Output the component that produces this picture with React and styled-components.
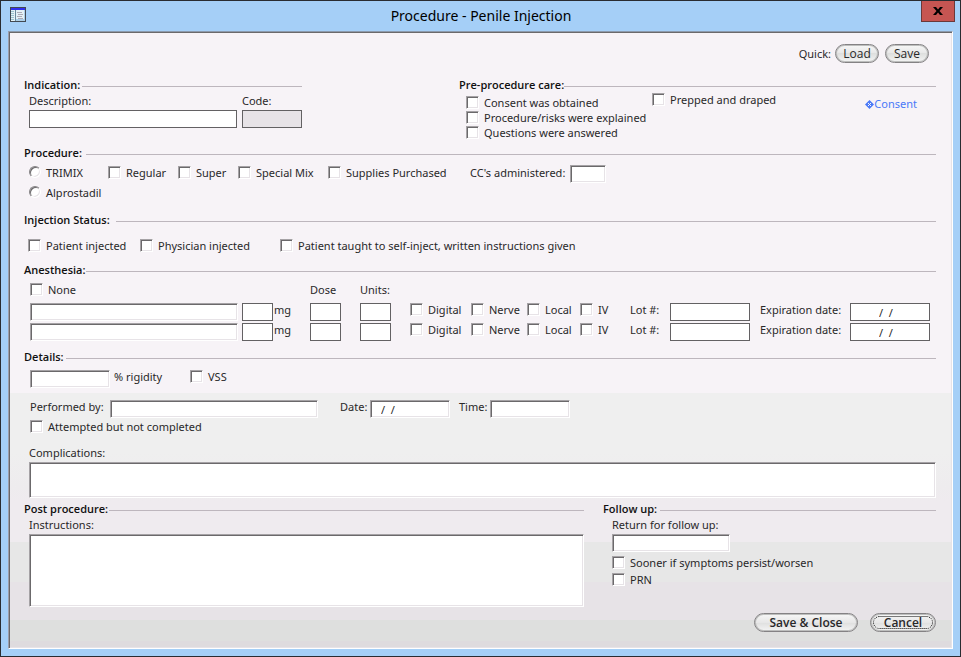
import React from 'react';
import styled, { createGlobalStyle } from 'styled-components';

const ANESTHESIA_TYPES = ['Digital', 'Nerve', 'Local', 'IV'];

const Check = ({ label, type = 'checkbox', name, height }) => (
  <CheckLabel $height={height}>
    {type === 'radio' ? <RadioInput type="radio" name={name} /> : <CheckInput type="checkbox" />}
    <span>{label}</span>
  </CheckLabel>
);

const Heading = ({ children, width }) => (
  <SectionHeading>
    <HeadingText $width={width}>{children}</HeadingText>
    <Rule />
  </SectionHeading>
);

const AnesthesiaRow = ({ index }) => (
  <AnesthesiaGrid>
    <SunkenInput $width={208} aria-label={`Anesthetic ${index}`} />
    <FlatInput $width={31} id={`amount-${index}`} />
    <Label htmlFor={`amount-${index}`}>mg</Label>
    <FlatInput $width={31} aria-label={`Dose ${index}`} />
    <FlatInput $width={31} aria-label={`Units ${index}`} />
    {ANESTHESIA_TYPES.map((type) => (
      <Check key={type} label={type} height={16} />
    ))}
    <Label htmlFor={`lot-${index}`}>Lot #:</Label>
    <FlatInput id={`lot-${index}`} />
    <span />
    <Label htmlFor={`expires-${index}`}>Expiration date:</Label>
    <FlatInput id={`expires-${index}`} defaultValue="/  /" $indent={28} />
  </AnesthesiaGrid>
);

const App = () => {
  return (
    <>
      <GlobalStyle />
      <Window>
        <TitleBar>
          <TitleIcon viewBox="0 0 16 15" shapeRendering="crispEdges" aria-hidden="true">
            <rect width="16" height="15" fill="#424952" />
            <rect x="1" y="1" width="14" height="13" fill="#e4f1f6" />
            <rect x="1" y="1" width="14" height="2" fill="#3130ef" />
            <path d="M1 4h3v1H1zM1 6h3v1H1zM1 8h3v1H1zM1 10h3v1H1zM1 12h3v1H1z" fill="#9cc3ce" />
            <path d="M5 3h1v11H5z" fill="#6b8a9c" />
            <path d="M7 5h5v1H7zM8 7h5v1H8zM7 9h5v1H7zM8 11h5v1H8z" fill="#adaab5" />
            <path d="M14 3h1v11h-1zM6 12h8v2H6z" fill="#adcfe7" />
          </TitleIcon>
          <Title>Procedure - Penile Injection</Title>
          <CloseButton aria-label="Close">
            <svg width="10" height="8" viewBox="0 0 10 8" aria-hidden="true">
              <path d="M0 0h3l2 2.500L7 0h3L6.500 4 10 8H7L5 5.500 3 8H0l3.500-4z" fill="#000" />
            </svg>
          </CloseButton>
        </TitleBar>

        <Panel>
          <QuickBar>
            <Label as="span">Quick:</Label>
            <QuickButtons>
              <PillButton $width={44}>Load</PillButton>
              <PillButton $width={44}>Save</PillButton>
            </QuickButtons>
          </QuickBar>

          <TopColumns>
            <section>
              <Heading width={58}>Indication:</Heading>
              <IndicationFields>
                <Stack>
                  <Label htmlFor="description">Description:</Label>
                  <FlatInput id="description" />
                </Stack>
                <Stack>
                  <Label htmlFor="code">Code:</Label>
                  <FlatInput id="code" readOnly />
                </Stack>
              </IndicationFields>
            </section>
            <section>
              <Heading width={103}>Pre-procedure care:</Heading>
              <CareFields>
                <CareList>
                  <Check label="Consent was obtained" height={15} />
                  <Check label="Procedure/risks were explained" height={15} />
                  <Check label="Questions were answered" height={15} />
                </CareList>
                <Check label="Prepped and draped" height={14} />
                <ConsentLink href="#consent">
                  <svg width="9" height="9" viewBox="0 0 9 9" aria-hidden="true">
                    <path d="M4.500 0L9 4.500 4.500 9 0 4.500z" fill="#4a79f7" />
                    <path d="M3 3l3 3M6 3L3 6" stroke="#f7f3f7" strokeWidth="1" />
                  </svg>
                  Consent
                </ConsentLink>
              </CareFields>
            </section>
          </TopColumns>

          <section>
            <Heading width={62}>Procedure:</Heading>
            <ProcedureGrid>
              <Check type="radio" name="drug" label="TRIMIX" />
              <Check label="Regular" />
              <Check label="Super" />
              <Check label="Special Mix" />
              <Check label="Supplies Purchased" />
              <Label htmlFor="ccs">CC's administered:</Label>
              <SunkenInput id="ccs" />
              <Check type="radio" name="drug" label="Alprostadil" />
            </ProcedureGrid>
          </section>

          <section>
            <Heading width={92}>Injection Status:</Heading>
            <StatusGrid>
              <Check label="Patient injected" />
              <Check label="Physician injected" />
              <Check label="Patient taught to self-inject, written instructions given" />
            </StatusGrid>
          </section>

          <section>
            <Heading width={62}>Anesthesia:</Heading>
            <AnesthesiaHead>
              <Check label="None" />
              <Label as="span">Dose</Label>
              <Label as="span">Units:</Label>
            </AnesthesiaHead>
            <AnesthesiaRow index={1} />
            <AnesthesiaRow index={2} />
          </section>

          <DetailsSection>
            <Heading width={42}>Details:</Heading>
            <DetailsGrid>
              <SunkenInput id="rigidity" />
              <Label htmlFor="rigidity">% rigidity</Label>
              <Check label="VSS" height={16} />
            </DetailsGrid>
          </DetailsSection>

          <section>
            <PerformedGrid>
              <Label htmlFor="performed">Performed by:</Label>
              <SunkenInput id="performed" />
              <span />
              <Label htmlFor="date">Date:</Label>
              <SunkenInput id="date" defaultValue="/  /" $indent={10} />
              <span />
              <Label htmlFor="time">Time:</Label>
              <SunkenInput id="time" />
            </PerformedGrid>
            <Attempted>
              <Check label="Attempted but not completed" height={16} />
            </Attempted>
            <Complications>
              <Label htmlFor="complications">Complications:</Label>
              <TextArea id="complications" $height={36} />
            </Complications>
          </section>

          <BottomColumns>
            <section>
              <Heading width={85}>Post procedure:</Heading>
              <Instructions>
                <Label htmlFor="instructions">Instructions:</Label>
                <TextArea id="instructions" $height={73} />
              </Instructions>
            </section>
            <section>
              <Heading width={57}>Follow up:</Heading>
              <FollowUp>
                <Label htmlFor="return">Return for follow up:</Label>
                <SunkenInput id="return" />
                <FollowChecks>
                  <Check label="Sooner if symptoms persist/worsen" height={17} />
                  <Check label="PRN" height={17} />
                </FollowChecks>
              </FollowUp>
            </section>
          </BottomColumns>

          <Footer>
            <PillButton $width={104} $strong>Save &amp; Close</PillButton>
            <PillButton $width={66} $strong $focused>Cancel</PillButton>
          </Footer>
        </Panel>
      </Window>
    </>
  );
};

const GlobalStyle = createGlobalStyle`
  * { box-sizing: border-box; }

  body {
    margin: 0;
    font-family: 'Noto Sans', 'Open Sans', sans-serif;
    font-size: 11px;
    line-height: 16px;
    color: #292829;
  }

  input, button, textarea { font: inherit; color: inherit; }
`;

const Window = styled.main`
  display: flex;
  flex-direction: column;
  min-width: 960px;
  min-height: 100vh;
  padding: 0 7px 7px;
  border: 1px solid #292c31;
  background: #a5cff7;
`;

const TitleBar = styled.header`
  display: grid;
  grid-template-columns: 31px 1fr 34px;
  align-items: start;
  height: 30px;
  padding-left: 2px;
  margin-right: -2px;
`;

const TitleIcon = styled.svg`
  width: 16px;
  height: 15px;
  margin-top: 6px;
`;

const Title = styled.h1`
  margin: 0;
  font-size: 14px;
  font-weight: 400;
  line-height: 30px;
  text-align: center;
  color: #000;
`;

const CloseButton = styled.button`
  display: flex;
  justify-content: center;
  align-items: center;
  height: 21px;
  padding: 0;
  border: 1px solid #6b3839;
  border-top: 0;
  background: #c65552;
`;

const Panel = styled.div`
  flex: 1;
  padding: 12px 16px 16px 15px;
  border: 1px solid;
  border-color: #8c9aad #fff #fff #9c9eab;
  box-shadow: inset 1px 1px 0 #6b696b, inset -1px -1px 0 #e7e3e7;
  background: linear-gradient(
    #f7f3f7 361px,
    #efefef 361px 420px,
    #eeecee 455px,
    #efebef 470px 510px,
    #e7e7e7 510px 550px,
    #e7e3e7 550px 588px,
    #dedfde 588px 609px,
    #dedbde 609px
  );
`;

const QuickBar = styled.div`
  display: flex;
  justify-content: flex-end;
  align-items: center;
  gap: 4px;
  padding-right: 7px;
  margin-bottom: 14px;
`;

const QuickButtons = styled.div`
  display: flex;
  gap: 6px;
`;

const Label = styled.label`
  white-space: nowrap;
`;

const SectionHeading = styled.div`
  display: flex;
  align-items: center;
  height: 16px;
`;

const HeadingText = styled.h2`
  min-width: ${({ $width }) => $width}px;
  margin: 0;
  font-family: 'Open Sans', sans-serif;
  font-size: 11px;
  font-weight: 600;
  line-height: 16px;
  white-space: nowrap;
  color: #101010;
`;

const Rule = styled.div`
  flex: 1;
  height: 1px;
  margin-top: 3px;
  background: #bdb6bd;
`;

const SunkenInput = styled.input`
  display: block;
  width: ${({ $width }) => ($width ? `${$width}px` : '100%')};
  min-width: 0;
  height: 18px;
  padding: 0 2px 0 ${({ $indent = 2 }) => $indent}px;
  border: 1px solid;
  border-color: #a5a2a5 #fff #fff #a5a2a5;
  border-radius: 0;
  box-shadow: inset 1px 1px 0 #6b696b, inset -1px -1px 0 #e7e3e7;
  background: #fff;
`;

const FlatInput = styled(SunkenInput)`
  border-color: #636163;
  box-shadow: none;

  &:read-only { background: #e7e3e7; }
`;

const TextArea = styled.textarea`
  display: block;
  width: 100%;
  height: ${({ $height }) => $height}px;
  padding: 2px;
  border: 1px solid;
  border-color: #a5a2a5 #fff #fff #a5a2a5;
  box-shadow: inset 1px 1px 0 #6b696b, inset -1px -1px 0 #e7e3e7;
  background: #fff;
  resize: none;
`;

const CheckLabel = styled.label`
  display: flex;
  align-items: center;
  gap: 5px;
  height: ${({ $height = 20 }) => $height}px;
  white-space: nowrap;
`;

const CheckInput = styled.input`
  appearance: none;
  flex: none;
  width: 13px;
  height: 13px;
  margin: 0 0 1px;
  border: 1px solid;
  border-color: #a5a2a5 #fff #fff #a5a2a5;
  box-shadow: inset 1px 1px 0 #6b696b, inset -1px -1px 0 #e7e3e7;
  background: #fff;
`;

const RadioInput = styled(CheckInput)`
  width: 12px;
  height: 12px;
  margin: 0 0 2px 1px;
  border-color: #848284 #fff #fff #848284;
  border-radius: 50%;
`;

const PillButton = styled.button`
  width: ${({ $width }) => $width}px;
  height: 19px;
  padding: 0;
  border: 1px solid #848284;
  border-radius: 10px;
  box-shadow: inset 0 0 0 1px #bdbebd;
  background: linear-gradient(#f7f7f7, #e7e7e7 50%, #dedfde 50%, #f4f4f4);
  font-family: 'Open Sans', sans-serif;
  font-size: 12px;
  font-weight: ${({ $strong }) => ($strong ? 600 : 400)};
  line-height: 16px;
  outline: ${({ $focused }) => ($focused ? '1px dotted #000' : 'none')};
  outline-offset: -4px;
`;

const TopColumns = styled.div`
  display: grid;
  grid-template-columns: 278px 1fr;
  gap: 157px;
  height: 68px;
`;

const Stack = styled.div`
  display: grid;
  gap: 1px;
`;

const IndicationFields = styled.div`
  display: grid;
  grid-template-columns: 1fr 60px;
  gap: 5px;
  padding-left: 5px;
`;

const CareFields = styled.div`
  display: grid;
  grid-template-columns: 186px 1fr auto;
  align-items: start;
  padding: 0 19px 0 7px;
`;

const CareList = styled.div`
  padding-top: 2px;
`;

const ConsentLink = styled.a`
  display: flex;
  align-items: center;
  padding-top: 3px;
  color: #4a79f7;
  text-decoration: none;
`;

const ProcedureGrid = styled.div`
  display: grid;
  grid-template-columns: 80px 70px 60px 90px 142px 100px 36px;
  align-items: center;
  padding: 2px 0 9px 4px;

  ${SunkenInput} { align-self: end; }
`;

const StatusGrid = styled.div`
  display: grid;
  grid-template-columns: 112px 140px 1fr;
  padding: 8px 0 6px 4px;
`;

const AnesthesiaHead = styled.div`
  display: grid;
  grid-template-columns: 280px 50px 1fr;
  align-items: center;
  padding: 2px 0 2px 6px;
`;

const AnesthesiaGrid = styled.div`
  display: grid;
  grid-template-columns:
    212px 32px 36px 50px 50px
    61px 56px 53px 50px
    40px minmax(80px, 1fr) 10px 90px minmax(80px, 1fr);
  height: 20px;
  padding: 0 6px;

  & > input { margin-top: 1px; }
`;

const DetailsSection = styled.section`
  padding-top: 7px;
`;

const DetailsGrid = styled.div`
  display: grid;
  grid-template-columns: 80px 72px 1fr;
  column-gap: 4px;
  padding: 4px 0 11px 6px;

  ${SunkenInput} { margin-top: 1px; }
`;

const PerformedGrid = styled.div`
  display: grid;
  grid-template-columns: 80px 208px 22px 30px 80px 9px 31px 80px;
  height: 20px;
  padding-left: 6px;

  ${SunkenInput} { margin-top: 1px; }
`;

const Attempted = styled.div`
  padding-left: 6px;
`;

const Complications = styled.div`
  display: grid;
  gap: 1px;
  padding: 10px 0 3px 5px;
`;

const BottomColumns = styled.div`
  display: grid;
  grid-template-columns: 1fr 333px;
  gap: 19px;
`;

const Instructions = styled.div`
  display: grid;
  gap: 1px;
  padding-left: 5px;
`;

const FollowUp = styled.div`
  display: grid;
  grid-template-columns: 118px;
  gap: 1px;
  padding-left: 9px;
`;

const FollowChecks = styled.div`
  padding-top: 1px;
`;

const Footer = styled.footer`
  display: flex;
  justify-content: flex-end;
  gap: 12px;
  padding-top: 6px;
`;

export default App;
